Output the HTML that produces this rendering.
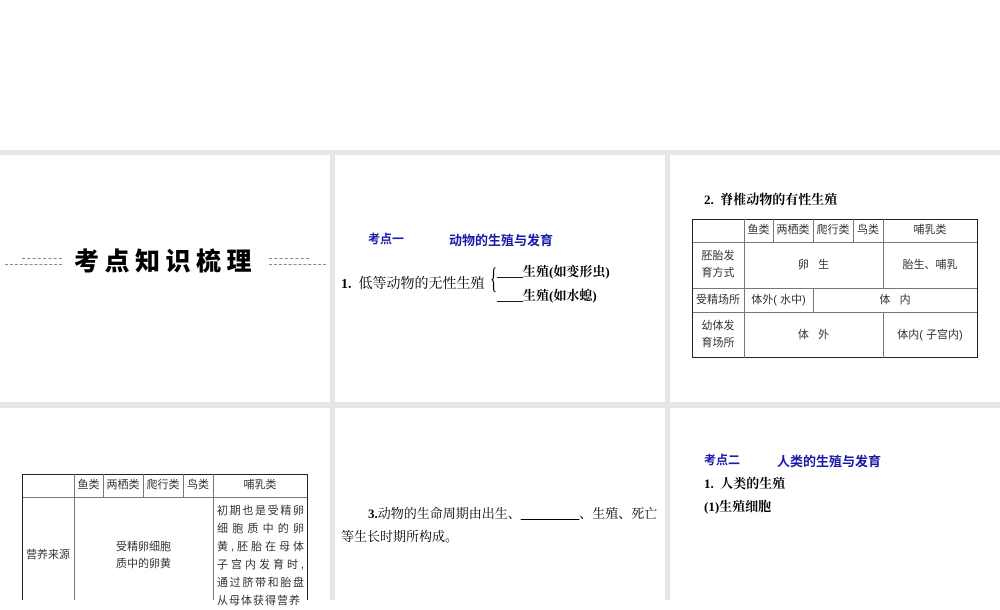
<!DOCTYPE html>
<html><head><meta charset="utf-8"><style>
body{margin:0;width:1000px;height:600px;position:relative;overflow:hidden;background:#fff;font-family:"Liberation Serif","Noto Serif CJK SC","Noto Sans CJK SC",serif;color:#000}
.g{position:absolute;background:#e6e6e6}
.a{position:absolute;white-space:nowrap}
.b{font-weight:bold}
.blue{color:#1a1aa8;font-family:"Liberation Sans","Noto Sans CJK SC",sans-serif;font-weight:bold;font-size:12px}
.l{position:absolute;background:#222}
.t{position:absolute;font-family:"Liberation Sans","Noto Sans CJK SC",sans-serif;font-size:11px;color:#333;text-align:center;display:flex;align-items:center;justify-content:center;line-height:17px}
.d{position:absolute;height:0;border-top:1px dashed #888}
</style></head><body>
<div class="g" style="left:0;top:150px;width:1000px;height:5px"></div>
<div class="g" style="left:0;top:402px;width:1000px;height:6px"></div>
<div class="g" style="left:330px;top:150px;width:5px;height:450px"></div>
<div class="g" style="left:665px;top:150px;width:5px;height:450px"></div>

<!-- slide 1 -->
<div class="d" style="left:22px;top:258px;width:40px"></div>
<div class="d" style="left:5px;top:264px;width:57px"></div>
<div class="d" style="left:269px;top:258px;width:40px"></div>
<div class="d" style="left:269px;top:264px;width:57px"></div>
<div class="a b" style="left:74px;top:242px;font-size:25px;letter-spacing:5.5px;font-family:'Noto Sans CJK SC',sans-serif;font-weight:900">考点知识梳理</div>

<!-- slide 2 -->
<div class="a blue" style="left:368px;top:230px">考点一</div>
<div class="a blue" style="left:449px;top:230px;font-size:13px">动物的生殖与发育</div>
<div class="a" style="left:341px;top:273px;font-size:14px"><b>1.</b>&nbsp;&nbsp;低等动物的无性生殖</div>
<div class="a" style="left:490px;top:261px;font-size:30px;font-weight:100;line-height:36px;transform:scaleX(.5);transform-origin:left">{</div>
<div class="a b" style="left:497px;top:261px;font-size:13px">____生殖(如变形虫)</div>
<div class="a b" style="left:497px;top:285px;font-size:13px">____生殖(如水螅)</div>

<!-- slide 3 -->
<div class="a b" style="left:704px;top:189px;font-size:13px">2.&nbsp;&nbsp;脊椎动物的有性生殖</div>
<div class="l" style="left:692px;top:219px;width:286px;height:1px"></div>
<div class="l" style="left:692px;top:242px;width:286px;height:1px;background:#777"></div>
<div class="l" style="left:692px;top:288px;width:286px;height:1px;background:#777"></div>
<div class="l" style="left:692px;top:312px;width:286px;height:1px;background:#777"></div>
<div class="l" style="left:692px;top:357px;width:286px;height:1px"></div>
<div class="l" style="left:692px;top:219px;width:1px;height:139px"></div>
<div class="l" style="left:977px;top:219px;width:1px;height:139px"></div>
<div class="l" style="left:744px;top:219px;width:1px;height:139px;background:#777"></div>
<div class="l" style="left:773px;top:219px;width:1px;height:23px;background:#777"></div>
<div class="l" style="left:813px;top:219px;width:1px;height:23px;background:#777"></div>
<div class="l" style="left:813px;top:288px;width:1px;height:24px;background:#777"></div>
<div class="l" style="left:853px;top:219px;width:1px;height:23px;background:#777"></div>
<div class="l" style="left:883px;top:219px;width:1px;height:69px;background:#777"></div>
<div class="l" style="left:883px;top:312px;width:1px;height:46px;background:#777"></div>
<div class="t" style="left:744px;top:219px;width:29px;height:23px">鱼类</div>
<div class="t" style="left:773px;top:219px;width:40px;height:23px">两栖类</div>
<div class="t" style="left:813px;top:219px;width:40px;height:23px">爬行类</div>
<div class="t" style="left:853px;top:219px;width:30px;height:23px">鸟类</div>
<div class="t" style="left:883px;top:219px;width:94px;height:23px">哺乳类</div>
<div class="t" style="left:692px;top:242px;width:52px;height:46px">胚胎发<br>育方式</div>
<div class="t" style="left:744px;top:242px;width:139px;height:46px">卵&nbsp;&nbsp;&nbsp;生</div>
<div class="t" style="left:883px;top:242px;width:94px;height:46px">胎生、哺乳</div>
<div class="t" style="left:692px;top:288px;width:52px;height:24px">受精场所</div>
<div class="t" style="left:744px;top:288px;width:69px;height:24px">体外( 水中)</div>
<div class="t" style="left:813px;top:288px;width:164px;height:24px">体&nbsp;&nbsp;&nbsp;内</div>
<div class="t" style="left:692px;top:312px;width:52px;height:46px">幼体发<br>育场所</div>
<div class="t" style="left:744px;top:312px;width:139px;height:46px">体&nbsp;&nbsp;&nbsp;外</div>
<div class="t" style="left:883px;top:312px;width:94px;height:46px">体内( 子宫内)</div>

<!-- slide 4 -->
<div class="l" style="left:22px;top:474px;width:286px;height:1px"></div>
<div class="l" style="left:22px;top:497px;width:286px;height:1px;background:#777"></div>
<div class="l" style="left:22px;top:474px;width:1px;height:126px"></div>
<div class="l" style="left:307px;top:474px;width:1px;height:126px"></div>
<div class="l" style="left:74px;top:474px;width:1px;height:126px;background:#777"></div>
<div class="l" style="left:103px;top:474px;width:1px;height:23px;background:#777"></div>
<div class="l" style="left:143px;top:474px;width:1px;height:23px;background:#777"></div>
<div class="l" style="left:183px;top:474px;width:1px;height:23px;background:#777"></div>
<div class="l" style="left:213px;top:474px;width:1px;height:126px;background:#777"></div>
<div class="t" style="left:74px;top:474px;width:29px;height:23px">鱼类</div>
<div class="t" style="left:103px;top:474px;width:40px;height:23px">两栖类</div>
<div class="t" style="left:143px;top:474px;width:40px;height:23px">爬行类</div>
<div class="t" style="left:183px;top:474px;width:30px;height:23px">鸟类</div>
<div class="t" style="left:213px;top:474px;width:94px;height:23px">哺乳类</div>
<div class="t" style="left:22px;top:540px;width:52px;height:30px">营养来源</div>
<div class="t" style="left:74px;top:536px;width:139px;height:40px">受精卵细胞<br>质中的卵黄</div>
<div class="a" style="left:217px;top:502px;width:88px;font-family:'Liberation Sans','Noto Sans CJK SC',sans-serif;font-size:11px;color:#333;line-height:18px;white-space:normal;text-align:justify;letter-spacing:1px">初期也是受精卵细胞质中的卵黄,胚胎在母体子宫内发育时,通过脐带和胎盘从母体获得营养</div>

<!-- slide 5 -->
<div class="a" style="left:368px;top:503px;font-size:13px"><b>3.</b>动物的生命周期由出生、<u>&nbsp;&nbsp;&nbsp;&nbsp;&nbsp;&nbsp;&nbsp;&nbsp;&nbsp;&nbsp;&nbsp;&nbsp;&nbsp;&nbsp;&nbsp;&nbsp;&nbsp;&nbsp;</u>、生殖、死亡</div>
<div class="a" style="left:341px;top:526px;font-size:13px">等生长时期所构成。</div>

<!-- slide 6 -->
<div class="a blue" style="left:704px;top:451px">考点二</div>
<div class="a blue" style="left:777px;top:451px;font-size:13px">人类的生殖与发育</div>
<div class="a b" style="left:704px;top:473px;font-size:13px">1.&nbsp;&nbsp;人类的生殖</div>
<div class="a b" style="left:704px;top:496px;font-size:13px">(1)生殖细胞</div>
</body></html>
